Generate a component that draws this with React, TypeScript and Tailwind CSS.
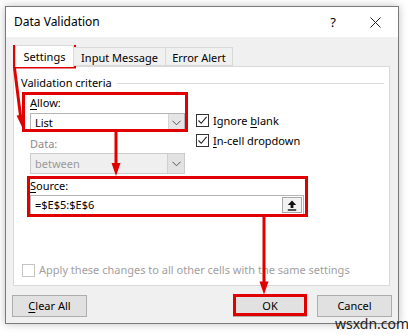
import React from "react";

const RED = "#e00000";

function Chevron() {
  return (
    <svg width="9" height="6" viewBox="0 0 9 6">
      <path d="M0.5 0.8 L4.5 4.8 L8.5 0.8" fill="none" stroke="#555" strokeWidth="1" />
    </svg>
  );
}

function Check({ checked, disabled }: { checked?: boolean; disabled?: boolean }) {
  return (
    <div
      className={
        "w-[13px] h-[13px] border bg-white flex items-center justify-center " +
        (disabled ? "border-[#c4c4c4]" : "border-[#333333]")
      }
    >
      {checked && (
        <svg width="11" height="11" viewBox="0 0 11 11">
          <path d="M1.5 5.5 L4.2 8.3 L9.6 1.8" fill="none" stroke="#222" strokeWidth="1.1" />
        </svg>
      )}
    </div>
  );
}

export default function App() {
  return (
    <div className="relative w-[408px] h-[336px] bg-white overflow-hidden font-['Noto_Sans','Liberation_Sans',sans-serif] text-[11px] text-black leading-[16px]">
      {/* dialog */}
      <div className="ml-[5px] mt-[6px] w-[394px] h-[318px] border border-[#7a7a7a] bg-[#f0f0f0] flex flex-col shadow-[0_0_8px_rgba(0,0,0,0.25)]">
        {/* title bar */}
        <div className="h-[30px] bg-white flex items-center pl-[8px] shrink-0">
          <span className="text-[12px]">Data Validation</span>
          <span className="ml-auto text-[13px] mr-[34px]">?</span>
          <svg className="mr-[17px]" width="11" height="11" viewBox="0 0 11 11">
            <path d="M0.5 0.5 L10.5 10.5 M10.5 0.5 L0.5 10.5" stroke="#222" strokeWidth="1" />
          </svg>
        </div>

        {/* body */}
        <div className="flex flex-col pl-[7px] pr-[8px] pt-[8px]">
          {/* tabs */}
          <div className="flex items-end ml-[2px] h-[21px] relative z-10">
            <div className="h-[22px] w-[59px] bg-white border border-b-0 border-[#d9d9d9] flex items-center justify-center -mb-px pt-[1px]">
              Settings
            </div>
            <div className="h-[19px] w-[92px] bg-[#f0f0f0] border border-l-0 border-[#d9d9d9] flex items-center justify-center pt-[2px]">
              Input Message
            </div>
            <div className="h-[19px] w-[67px] bg-[#f0f0f0] border border-l-0 border-[#d9d9d9] flex items-center justify-center pt-[2px]">
              Error Alert
            </div>
          </div>

          {/* panel */}
          <div className="w-[377px] h-[220px] bg-white border border-[#d9d9d9] flex flex-col px-[7px]">
            <div className="mt-[8px] h-[16px] flex items-center">
              <span>Validation criteria</span>
              <div className="flex-1 h-px bg-[#dcdcdc] ml-[5px] mr-[-2px]" />
            </div>

            <div className="ml-[9px] flex flex-col">
              <div className="mt-[4px] h-[16px]">
                <span className="underline underline-offset-2">A</span>llow:
              </div>

              <div className="flex">
                <div className="w-[155px] flex flex-col">
                  <div className="mt-[2px] h-[19px] border border-[#b4b4b4] bg-white flex">
                    <div className="flex-1 pl-[4px] flex items-center">List</div>
                    <div className="w-[16px] bg-[#e5e5e5] border-l border-[#d4d4d4] flex items-center justify-center">
                      <Chevron />
                    </div>
                  </div>
                  <div className="mt-[4px] h-[16px] text-[#8a8a8a]">Data:</div>
                  <div className="mt-[1px] h-[21px] border border-[#cccccc] bg-[#efefef] flex">
                    <div className="flex-1 pl-[4px] flex items-center text-[#9a9a9a]">between</div>
                    <div className="w-[17px] bg-[#e2e2e2] border-l border-[#d0d0d0] flex items-center justify-center">
                      <Chevron />
                    </div>
                  </div>
                </div>
                <div className="ml-[11px] flex flex-col">
                  <div className="mt-[3px] h-[13px] flex items-center">
                    <Check checked />
                    <span className="ml-[4px]">
                      Ignore <span className="underline underline-offset-2">b</span>lank
                    </span>
                  </div>
                  <div className="mt-[7px] h-[13px] flex items-center">
                    <Check checked />
                    <span className="ml-[4px]">
                      <span className="underline underline-offset-2">I</span>n-cell dropdown
                    </span>
                  </div>
                </div>
              </div>

              <div className="mt-[4px] h-[16px]">
                <span className="underline underline-offset-2">S</span>ource:
              </div>
              <div className="mt-[1px] w-[274px] h-[20px] border border-[#b4b4b4] bg-white flex">
                <div className="flex-1 pl-[4px] flex items-center">=$E$5:$E$6</div>
                <div className="w-[20px] m-px border border-[#a8a8a8] bg-[#f2f2f2] flex items-center justify-center">
                  <svg width="10" height="11" viewBox="0 0 10 11">
                    <path d="M5 0.5 L9.2 5 L6.4 5 L6.4 8 L3.6 8 L3.6 5 L0.8 5 Z" fill="#111" />
                    <rect x="0.8" y="9.3" width="8.4" height="1.4" fill="#111" />
                  </svg>
                </div>
              </div>
            </div>

            <div className="mt-auto mb-[7px] ml-[1px] h-[16px] flex items-center">
              <Check disabled />
              <span className="ml-[4px] text-[#a0a0a0]">Apply these changes to all other cells with the same settings</span>
            </div>
          </div>

          {/* buttons */}
          <div className="-ml-px w-[380px] mt-[9px] flex">
            <div className="w-[75px] h-[22px] bg-[#e1e1e1] border border-[#adadad] flex items-center justify-center">
              <span>
                <span className="underline underline-offset-2">C</span>lear All
              </span>
            </div>
            <div className="ml-auto w-[74px] h-[22px] bg-[#e1e1e1] border border-[#adadad] flex items-center justify-center">
              OK
            </div>
            <div className="ml-[10px] w-[75px] h-[22px] bg-[#e1e1e1] border border-[#adadad] flex items-center justify-center">
              Cancel
            </div>
          </div>
        </div>
      </div>

      {/* red annotations overlay */}
      <svg className="absolute left-0 top-0 pointer-events-none" width="408" height="336" viewBox="0 0 408 336">
        <g fill="none" stroke={RED} strokeWidth="3">
          <rect x="14.5" y="46.5" width="60" height="20.5" />
          <rect x="23.5" y="93.5" width="163" height="37" />
          <rect x="28.5" y="177.5" width="278" height="38" />
          <rect x="234.5" y="295.5" width="71" height="19" />
          <line x1="14.5" y1="68" x2="20.5" y2="116" />
          <line x1="116" y1="132" x2="116" y2="164" />
          <line x1="264" y1="217" x2="264" y2="283" />
        </g>
        <g fill={RED}>
          <path d="M22.5 128 L16.6 115.5 L24.4 114.5 Z" />
          <path d="M116 176 L111.5 163 L120.5 163 Z" />
          <path d="M264 294.5 L259.5 281.5 L268.5 281.5 Z" />
        </g>
      </svg>

      {/* watermark */}
      <div className="absolute left-[335px] top-[316px] text-[14px] leading-[16px] text-[#222] font-['Noto_Sans',sans-serif]">
        wsxdn.com
      </div>
    </div>
  );
}
